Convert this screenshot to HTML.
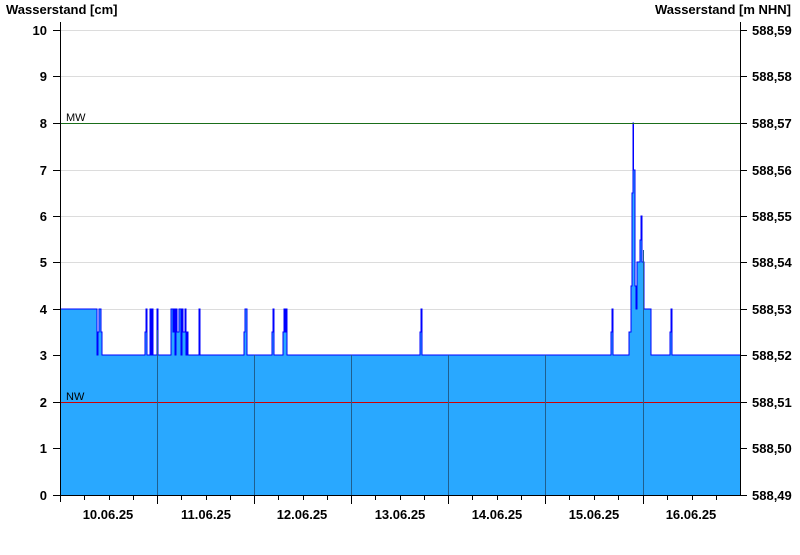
<!DOCTYPE html><html><head><style>body{margin:0;background:#fff;width:800px;height:550px;overflow:hidden}</style></head><body>
<svg width="800" height="550" xmlns="http://www.w3.org/2000/svg" font-family="Liberation Sans, Arial, sans-serif">
<text x="6" y="14" font-size="13" font-weight="bold">Wasserstand [cm]</text>
<text x="791" y="14" font-size="13" font-weight="bold" text-anchor="end">Wasserstand [m NHN]</text>
<g stroke="#dcdcdc" stroke-width="1">
<line x1="60" x2="740" y1="30.5" y2="30.5"/><line x1="60" x2="740" y1="76.5" y2="76.5"/><line x1="60" x2="740" y1="170.5" y2="170.5"/><line x1="60" x2="740" y1="216.5" y2="216.5"/><line x1="60" x2="740" y1="262.5" y2="262.5"/><line x1="60" x2="740" y1="309.5" y2="309.5"/><line x1="60" x2="740" y1="355.5" y2="355.5"/><line x1="60" x2="740" y1="448.5" y2="448.5"/>
</g>
<path id="d" fill="#29a8ff" stroke="none" d="M60.5,309 H97 V355 H98 V332 H99 V309 H101 V332 H102 V355 H145 V332 H146 V309 H147 V355 H150 V309 H151 V355 H152 V309 H153 V355 H157 V309 H158 V355 H171 V309 H173 V332 H174 V309 H175 V355 H176 V309 H177 V332 H179 V309 H181 V355 H182 V309 H183 V332 H185 V309 H186 V355 H187 V332 H188 V355 H199 V309 H200 V355 H244 V332 H245 V309 H247 V355 H272 V332 H273 V309 H274 V355 H283 V332 H284 V309 H285 V332 H286 V309 H287 V355 H420 V332 H421 V309 H422 V355 H611 V332 H612 V309 H613 V355 H629 V332 H631 V286 H632 V193 H633 V123 H633.5 V170 H635 V286 H636 V309 H637 V262 H640 V240 H641 V216 H642 V262 H644 V309 H651 V355 H670 V332 H671 V309 H672 V355 H740 V495 H60.5 Z"/>
<path fill="none" stroke="#0000ff" stroke-width="1" d="M60.5,309 H97 V355 H98 V332 H99 V309 H101 V332 H102 V355 H145 V332 H146 V309 H147 V355 H150 V309 H151 V355 H152 V309 H153 V355 H157 V309 H158 V355 H171 V309 H173 V332 H174 V309 H175 V355 H176 V309 H177 V332 H179 V309 H181 V355 H182 V309 H183 V332 H185 V309 H186 V355 H187 V332 H188 V355 H199 V309 H200 V355 H244 V332 H245 V309 H247 V355 H272 V332 H273 V309 H274 V355 H283 V332 H284 V309 H285 V332 H286 V309 H287 V355 H420 V332 H421 V309 H422 V355 H611 V332 H612 V309 H613 V355 H629 V332 H631 V286 H632 V193 H633 V123 H633.5 V170 H635 V286 H636 V309 H637 V262 H640 V240 H641 V216 H642 V262 H644 V309 H651 V355 H670 V332 H671 V309 H672 V355 H740"/>
<line x1="60" x2="740" y1="123.5" y2="123.5" stroke="#1a6e1a"/>
<line x1="60" x2="740" y1="402.5" y2="402.5" stroke="#d00000"/>
<text x="66" y="121" font-size="11">MW</text>
<text x="66" y="400" font-size="11">NW</text>
<g stroke="#1f5f8f" stroke-width="1"><line x1="157.5" x2="157.5" y1="330" y2="495"/><line x1="254.5" x2="254.5" y1="355" y2="495"/><line x1="351.5" x2="351.5" y1="355" y2="495"/><line x1="448.5" x2="448.5" y1="355" y2="495"/><line x1="545.5" x2="545.5" y1="355" y2="495"/><line x1="643.5" x2="643.5" y1="250" y2="495"/></g>
<g stroke="#000" stroke-width="1">
<line x1="60.5" x2="60.5" y1="22" y2="502"/><line x1="740.5" x2="740.5" y1="22" y2="495"/><line x1="53" x2="747" y1="495.5" y2="495.5"/>
<line x1="53" x2="60" y1="30.5" y2="30.5"/><line x1="53" x2="60" y1="76.5" y2="76.5"/><line x1="53" x2="60" y1="123.5" y2="123.5"/><line x1="53" x2="60" y1="170.5" y2="170.5"/><line x1="53" x2="60" y1="216.5" y2="216.5"/><line x1="53" x2="60" y1="262.5" y2="262.5"/><line x1="53" x2="60" y1="309.5" y2="309.5"/><line x1="53" x2="60" y1="355.5" y2="355.5"/><line x1="53" x2="60" y1="402.5" y2="402.5"/><line x1="53" x2="60" y1="448.5" y2="448.5"/>
<line x1="740" x2="747" y1="30.5" y2="30.5"/><line x1="740" x2="747" y1="76.5" y2="76.5"/><line x1="740" x2="747" y1="123.5" y2="123.5"/><line x1="740" x2="747" y1="170.5" y2="170.5"/><line x1="740" x2="747" y1="216.5" y2="216.5"/><line x1="740" x2="747" y1="262.5" y2="262.5"/><line x1="740" x2="747" y1="309.5" y2="309.5"/><line x1="740" x2="747" y1="355.5" y2="355.5"/><line x1="740" x2="747" y1="402.5" y2="402.5"/><line x1="740" x2="747" y1="448.5" y2="448.5"/>
<line x1="157.5" x2="157.5" y1="495" y2="504"/><line x1="254.5" x2="254.5" y1="495" y2="504"/><line x1="351.5" x2="351.5" y1="495" y2="504"/><line x1="448.5" x2="448.5" y1="495" y2="504"/><line x1="545.5" x2="545.5" y1="495" y2="504"/><line x1="643.5" x2="643.5" y1="495" y2="504"/>
<path d="M84.5,495v5M109.5,495v5M133.5,495v5M181.5,495v5M206.5,495v5M230.5,495v5M278.5,495v5M303.5,495v5M327.5,495v5M375.5,495v5M400.5,495v5M424.5,495v5M472.5,495v5M497.5,495v5M521.5,495v5M569.5,495v5M594.5,495v5M618.5,495v5M667.5,495v5M692.5,495v5M716.5,495v5"/>
</g>
<g font-size="13" font-weight="bold" text-anchor="end">
<text x="47" y="35">10</text><text x="47" y="81">9</text><text x="47" y="128">8</text><text x="47" y="175">7</text><text x="47" y="221">6</text><text x="47" y="267">5</text><text x="47" y="314">4</text><text x="47" y="360">3</text><text x="47" y="407">2</text><text x="47" y="453">1</text><text x="47" y="500">0</text>
</g>
<g font-size="13" font-weight="bold">
<text x="752" y="35">588,59</text><text x="752" y="81">588,58</text><text x="752" y="128">588,57</text><text x="752" y="175">588,56</text><text x="752" y="221">588,55</text><text x="752" y="267">588,54</text><text x="752" y="314">588,53</text><text x="752" y="360">588,52</text><text x="752" y="407">588,51</text><text x="752" y="453">588,50</text><text x="752" y="500">588,49</text>
</g>
<g font-size="13" font-weight="bold" text-anchor="middle">
<text x="108" y="519">10.06.25</text><text x="206" y="519">11.06.25</text><text x="302" y="519">12.06.25</text><text x="400" y="519">13.06.25</text><text x="497" y="519">14.06.25</text><text x="594" y="519">15.06.25</text><text x="691" y="519">16.06.25</text>
</g>
</svg>
</body></html>
